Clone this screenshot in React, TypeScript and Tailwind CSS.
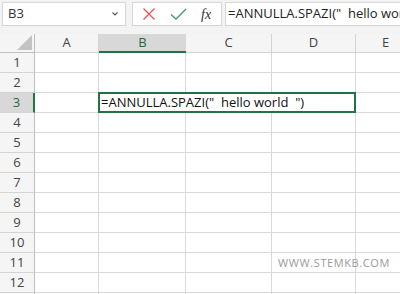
import React from "react";

const cols = [
  { label: "", w: 35 },
  { label: "A", w: 64 },
  { label: "B", w: 87 },
  { label: "C", w: 86 },
  { label: "D", w: 84 },
  { label: "E", w: 60 },
];

const rows = Array.from({ length: 13 }, (_, i) => i + 1);

export default function App() {
  return (
    <div
      className="relative w-[400px] h-[294px] overflow-hidden bg-white"
      style={{ fontFamily: '"Open Sans", "Noto Sans", sans-serif' }}
    >
      {/* Top bar */}
      <div className="flex h-[34px] items-start bg-[#f3f3f3] pt-[2px] pl-[2px]">
        <div className="flex h-[24px] w-[124px] items-center justify-between border border-[#d6d6d6] bg-white pl-[5px] pr-[6px]">
          <span className="text-[13px] text-[#333]">B3</span>
          <svg width="8" height="6" viewBox="0 0 8 6">
            <path d="M1.5 1.5 L4 4 L6.5 1.5" stroke="#555" strokeWidth="1.1" fill="none" />
          </svg>
        </div>
        <div className="ml-[6px] flex h-[24px] w-[90px] items-center border border-[#d6d6d6] bg-white">
          <svg className="ml-[9px]" width="14" height="14" viewBox="0 0 14 14">
            <path d="M1.5 1.5 L12.5 12.5 M12.5 1.5 L1.5 12.5" stroke="#e8545a" strokeWidth="1.3" fill="none" />
          </svg>
          <svg className="ml-[14px]" width="17" height="14" viewBox="0 0 17 14">
            <path d="M1 7.5 L6 12 L16 2" stroke="#3d9b57" strokeWidth="1.3" fill="none" />
          </svg>
          <span
            className="ml-[14px] text-[14px] italic text-[#333]"
            style={{ fontFamily: '"Liberation Serif", "DejaVu Serif", serif' }}
          >
            fx
          </span>
        </div>
        <div className="ml-[3px] flex h-[24px] flex-1 items-center overflow-hidden whitespace-pre border border-r-0 border-[#d6d6d6] bg-white pl-[2px] text-[13px] text-[#222]">
          {'=ANNULLA.SPAZI("  hello world  ")'}
        </div>
      </div>

      {/* Header row */}
      <div className="flex h-[19px] bg-[#f5f5f5]">
        {cols.map((c, i) => {
          const sel = c.label === "B";
          return (
            <div
              key={i}
              style={{ width: c.w }}
              className={
                "relative flex shrink-0 items-center justify-center text-[13px] " +
                (i === 0
                  ? "border-r border-b border-[#bfbfbf]"
                  : sel
                  ? "border-b-2 border-[#217346] bg-[#d8d8d8] text-[#1e6b42]"
                  : "border-r border-b border-[#d4d4d4] text-[#444]")
              }
            >
              {i === 0 ? (
                <svg className="absolute right-[2px] bottom-[2px]" width="15" height="15" viewBox="0 0 15 15">
                  <path d="M15 0 L15 15 L0 15 Z" fill="#c3c3c3" />
                </svg>
              ) : (
                c.label
              )}
            </div>
          );
        })}
      </div>

      {/* Rows */}
      {rows.map((r) => (
        <div key={r} className="flex h-[20px]">
          {cols.map((c, i) => {
            const selRow = r === 3 && i === 0;
            return (
              <div
                key={i}
                style={{ width: c.w }}
                className={
                  "flex shrink-0 items-center justify-center text-[13px] " +
                  (i === 0
                    ? selRow
                      ? "border-r-2 border-b border-r-[#217346] border-b-[#d4d4d4] bg-[#d8d8d8] text-[#1e6b42]"
                      : "border-r border-b border-r-[#bfbfbf] border-b-[#d4d4d4] bg-[#f5f5f5] text-[#444]"
                    : "border-r border-b border-[#d9d9d9]")
                }
              >
                {i === 0 ? r : null}
              </div>
            );
          })}
        </div>
      ))}

      {/* Active editing cell */}
      <div className="absolute left-[98px] top-[92px] flex h-[21px] w-[258px] items-center whitespace-pre border-2 border-[#217346] bg-white pl-[1px] text-[13px] text-[#111]">
        {'=ANNULLA.SPAZI("  hello world  ")'}
      </div>

      {/* Watermark */}
      <div className="absolute left-[278px] top-[255px] text-[11px] tracking-[0.6px] text-[#9a9a9a]">
        WWW.STEMKB.COM
      </div>
    </div>
  );
}
